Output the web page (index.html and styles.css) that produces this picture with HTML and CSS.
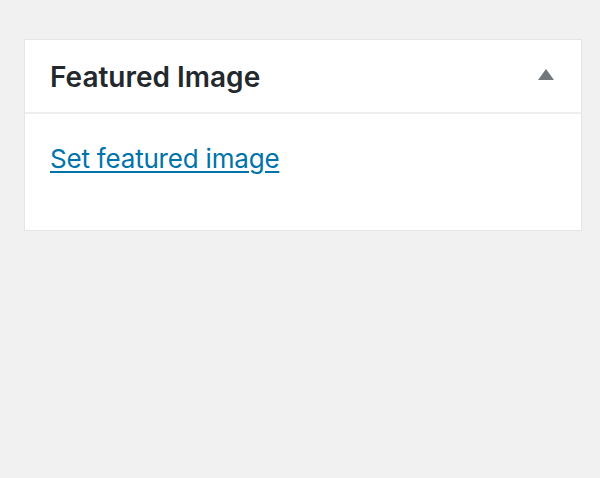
FILE: index.html
```html
<!DOCTYPE html>
<html>
<head>
<meta charset="utf-8">
<link rel="stylesheet" href="styles.css">
</head>
<body>
<div class="postbox">
  <div class="postbox-header">
    <h2 class="postbox-title">Featured Image</h2>
    <span class="toggle-arrow" aria-hidden="true"></span>
  </div>
  <div class="postbox-inside">
    <a class="set-image" href="#">Set featured image</a>
  </div>
</div>
</body>
</html>
```
FILE: styles.css
```css
html, body {
  margin: 0;
  padding: 0;
  background: #f1f1f1;
}
body {
  padding: 39px 18px 0 24px;
  font-family: Inter, "Noto Sans", sans-serif;
}
.postbox {
  background: #fff;
  border: 1px solid #e5e5e5;
  box-shadow: 0 1px 1px rgba(0,0,0,0.04);
  width: 556px;
  box-sizing: content-box;
}
.postbox-header {
  display: flex;
  align-items: center;
  justify-content: space-between;
  height: 72px;
  padding: 0 27px 0 25px;
  border-bottom: 2px solid #eeeeee;
}
.postbox-title {
  margin: 4px 0 0;
  font-size: 28px;
  line-height: 1.2;
  font-weight: 600;
  color: #23282d;
  letter-spacing: 0;
}
.toggle-arrow {
  width: 0;
  height: 0;
  border-left: 8px solid transparent;
  border-right: 8px solid transparent;
  border-bottom: 11px solid #72777c;
  margin-top: -3px;
}
.postbox-inside {
  padding: 28px 25px 54px;
  line-height: 1.3;
}
.set-image {
  font-size: 26px;
  letter-spacing: -0.2px;
  color: #0073aa;
  text-decoration: underline;
  text-decoration-thickness: 2px;
  text-underline-offset: 3px;
}
```
